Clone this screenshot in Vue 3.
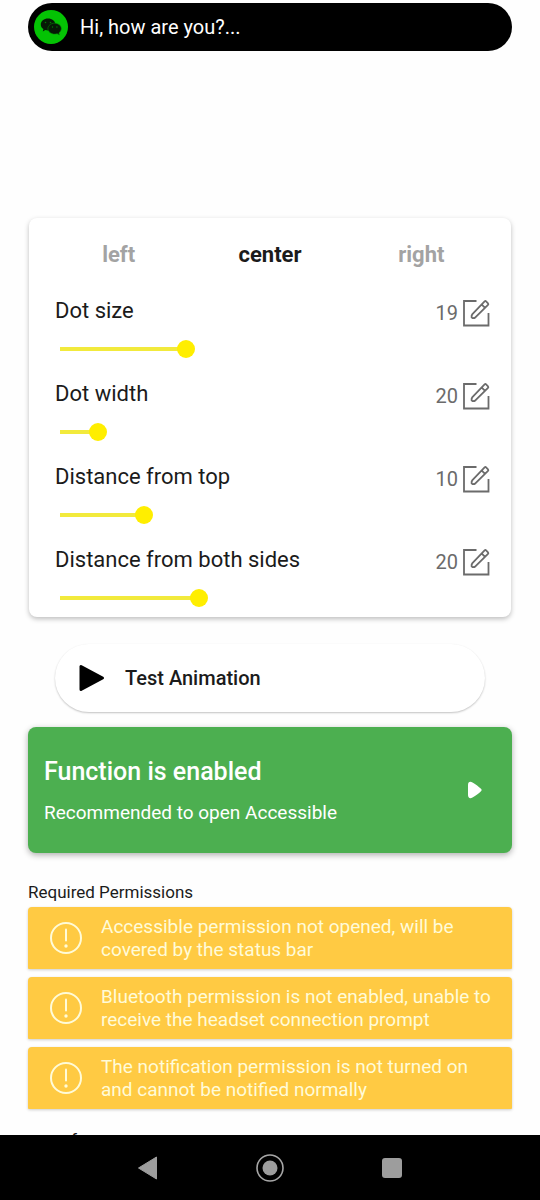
<script setup>
import { ref } from 'vue'

const positions = ['left', 'center', 'right']
const position = ref('center')

const settings = ref([
  { id: 'size', label: 'Dot size', amount: 19, level: 30 },
  { id: 'width', label: 'Dot width', amount: 20, level: 9 },
  { id: 'top', label: 'Distance from top', amount: 10, level: 20 },
  { id: 'sides', label: 'Distance from both sides', amount: 20, level: 33 },
])

const permissions = [
  'Accessible permission not opened, will be covered by the status bar',
  'Bluetooth permission is not enabled, unable to receive the headset connection prompt',
  'The notification permission is not turned on and cannot be notified normally',
]
</script>

<template>
  <div class="screen">
    <main class="content">
      <header class="island">
        <svg class="avatar" viewBox="0 0 34 34" aria-hidden="true">
          <circle cx="17" cy="17" r="17" fill="#04c304" />
          <path d="M14 8.500c-4 0-7.200 2.600-7.200 6 0 2 1.100 3.500 2.600 4.600l-.6 2.300 2.500-1.300c1 .3 1.700.4 2.700.4 4.100 0 7.300-2.500 7.300-6s-3.200-6-7.300-6z" fill="#061806" />
          <path d="M20.600 13.200c3.700 0 6.700 2.400 6.700 5.400 0 1.800-1 3.300-2.400 4.300l.5 2-2.200-1.200c-.8.2-1.700.4-2.600.4-3.700 0-6.700-2.500-6.700-5.500s3-5.400 6.700-5.400z" fill="#061806" stroke="#048804" stroke-width=".6" />
          <g fill="#047804">
            <circle cx="11.500" cy="12.500" r=".8" /><circle cx="16.500" cy="12.500" r=".8" />
            <circle cx="18.500" cy="17" r=".7" /><circle cx="22.900" cy="17" r=".7" />
          </g>
        </svg>
        <span>Hi, how are you?...</span>
      </header>

      <section class="panel">
        <div class="tabs">
          <button
            v-for="name in positions"
            :key="name"
            type="button"
            class="tab"
            :class="{ active: position === name }"
            @click="position = name"
          >{{ name }}</button>
        </div>
        <div v-for="item in settings" :key="item.id" class="setting">
          <div class="setting-head">
            <label :for="item.id">{{ item.label }}</label>
            <button type="button" class="edit" :aria-label="'Edit ' + item.label">
              <span>{{ item.amount }}</span>
              <svg viewBox="0 0 28 28" aria-hidden="true" fill="none" stroke="#6b6b6b" stroke-width="1.800">
                <path d="M14.500 2H2v24.500h24.500V14" />
                <path d="M22.600 2.400q.8-.7 1.500 0l1.900 1.900q.7.800 0 1.500L13.600 18.200q-1.300 1.100-3 1l-1-.9q-.3-1.800.8-3.200zM19.600 5.400l3.400 3.400" stroke-linejoin="round" />
              </svg>
            </button>
          </div>
          <input
            :id="item.id"
            v-model.number="item.level"
            class="slider"
            type="range"
            min="0"
            max="100"
            :style="{ '--level': item.level / 100 }"
          />
        </div>
      </section>

      <button type="button" class="test">
        <svg viewBox="0 0 26 28" aria-hidden="true">
          <path d="M2 2.500v23L23.500 14z" fill="#000" stroke="#000" stroke-width="3" stroke-linejoin="round" />
        </svg>
        <span>Test Animation</span>
      </button>

      <button type="button" class="status">
        <span class="status-text">
          <strong>Function is enabled</strong>
          <span>Recommended to open Accessible</span>
        </span>
        <svg viewBox="0 0 16 18" aria-hidden="true">
          <path d="M1 4C1 1 3 0 5.500 1.500c3.500 2 6 4 8.500 6.300q1.500 1.200 0 2.400c-2.500 2.300-5 4.300-8.500 6.300C3 18 1 17 1 14z" fill="#fff" />
        </svg>
      </button>

      <h2>Required Permissions</h2>
      <ul class="permissions">
        <li v-for="text in permissions" :key="text">
          <button type="button" class="permission">
            <svg viewBox="0 0 32 32" aria-hidden="true">
              <circle cx="16" cy="16" r="15" fill="none" stroke="#fffbd8" stroke-width="2" />
              <path d="M16 7.500v11" stroke="#fffbd8" stroke-width="2" stroke-linecap="round" />
              <circle cx="16" cy="24" r="1.700" fill="#fffbd8" />
            </svg>
            <span>{{ text }}</span>
          </button>
        </li>
      </ul>
      <p class="more">manufacturer</p>
    </main>

    <nav class="navbar">
      <button type="button" aria-label="Back">
        <svg viewBox="0 0 28 28"><path d="M22.500 3v22L4.500 14z" fill="#9d9d9d" stroke="#9d9d9d" stroke-linejoin="round" /></svg>
      </button>
      <button type="button" aria-label="Home">
        <svg viewBox="0 0 28 28"><circle cx="14" cy="14" r="13" fill="none" stroke="#a6a6a6" stroke-width="1.600" /><circle cx="14" cy="14" r="7.500" fill="#9d9d9d" /></svg>
      </button>
      <button type="button" aria-label="Recents">
        <svg viewBox="0 0 28 28"><rect x="4" y="4" width="20" height="20" rx="3" fill="#9d9d9d" /></svg>
      </button>
    </nav>
  </div>
</template>

<style>
body {
  margin: 0;
  background: #fefefe;
}
</style>

<style scoped>
.screen {
  display: flex;
  flex-direction: column;
  height: 100vh;
  font-family: Roboto, "Liberation Sans", sans-serif;
  color: #1b1b1b;
}

.screen * {
  box-sizing: border-box;
}

button {
  margin: 0;
  padding: 0;
  border: 0;
  background: none;
  color: inherit;
  font: inherit;
  text-align: left;
  cursor: pointer;
}

svg {
  display: block;
  flex: none;
}

.content {
  flex: 1;
  min-height: 0;
  overflow: hidden;
  padding: 3px 28px 0;
}

.island {
  display: flex;
  align-items: center;
  gap: 12px;
  height: 48px;
  padding: 0 6px;
  border-radius: 24px;
  background: #000;
  color: #fff;
  font-size: 20px;
}

.avatar {
  width: 34px;
  height: 34px;
}

.panel {
  margin: 167px 1px 0;
  padding: 22px 21px 16px 26px;
  border-radius: 8px;
  background: #fff;
  box-shadow: 0 2px 5px rgba(0, 0, 0, 0.26);
}

.tabs {
  display: grid;
  grid-template-columns: repeat(3, 1fr);
  height: 29px;
  margin: 0 -7px 0 -12px;
}

.tab {
  text-align: center;
  font-size: 22px;
  font-weight: 700;
  color: #a3a3a3;
}

.tab.active {
  color: #1b1b1b;
}

.setting {
  height: 83px;
  padding-top: 25px;
}

.setting-head {
  display: flex;
  align-items: center;
  justify-content: space-between;
  height: 32px;
  font-size: 22px;
}

.edit {
  display: flex;
  align-items: center;
  gap: 4px;
  padding-top: 5px;
  font-size: 20px;
  color: #6b6b6b;
}

.edit svg {
  width: 28px;
  height: 28px;
}

.slider {
  display: block;
  appearance: none;
  width: calc(100% + 4px);
  height: 18px;
  margin: 14px 0 0 -4px;
  background: none;
}

.slider::-webkit-slider-runnable-track {
  height: 18px;
  background-image: linear-gradient(#f2ea3c, #f2ea3c);
  background-position: 9px 7px;
  background-size: calc((100% - 18px) * var(--level)) 4px;
  background-repeat: no-repeat;
}

.slider::-webkit-slider-thumb {
  appearance: none;
  width: 18px;
  height: 18px;
  border-radius: 50%;
  background: #ffee00;
}

.test {
  display: flex;
  align-items: center;
  gap: 20px;
  width: calc(100% - 54px);
  height: 68px;
  margin: 27px 27px 0;
  padding: 0 24px;
  border-radius: 34px;
  background: #fff;
  box-shadow: 0 1px 2px rgba(0, 0, 0, 0.24);
  font-size: 20px;
  font-weight: 500;
}

.test svg {
  width: 26px;
  height: 28px;
}

.status {
  display: flex;
  align-items: center;
  justify-content: space-between;
  width: 100%;
  height: 126px;
  margin-top: 15px;
  padding: 0 29px 0 16px;
  border-radius: 8px;
  background: #4caf50;
  box-shadow: 0 2px 6px rgba(0, 0, 0, 0.32);
  color: #fff;
}

.status svg {
  width: 16px;
  height: 18px;
}

.status-text {
  display: grid;
  gap: 13px;
  padding-top: 5px;
  font-size: 19px;
  line-height: 28px;
}

.status-text strong {
  font-size: 25px;
  font-weight: 500;
}

h2 {
  margin: 29px 0 5px;
  font-size: 17px;
  line-height: 20px;
  font-weight: 400;
}

.permissions {
  display: grid;
  gap: 8px;
  margin: 0;
  padding: 0;
  list-style: none;
}

.permission {
  display: flex;
  align-items: center;
  gap: 19px;
  width: 100%;
  min-height: 62px;
  padding: 0 8px 0 22px;
  border-radius: 4px 4px 1px 1px;
  background: #ffca43;
  box-shadow: 0 1px 3px rgba(0, 0, 0, 0.2);
  color: #fffbd8;
  font-size: 19px;
  line-height: 23px;
}

.permission svg {
  width: 32px;
  height: 32px;
}

.more {
  margin: 19px 0 0;
  font-size: 17px;
  line-height: 24px;
}

.navbar {
  display: flex;
  justify-content: center;
  gap: 94px;
  align-items: center;
  height: 65px;
  flex: none;
  background: #000;
}

.navbar svg {
  width: 28px;
  height: 28px;
}
</style>
